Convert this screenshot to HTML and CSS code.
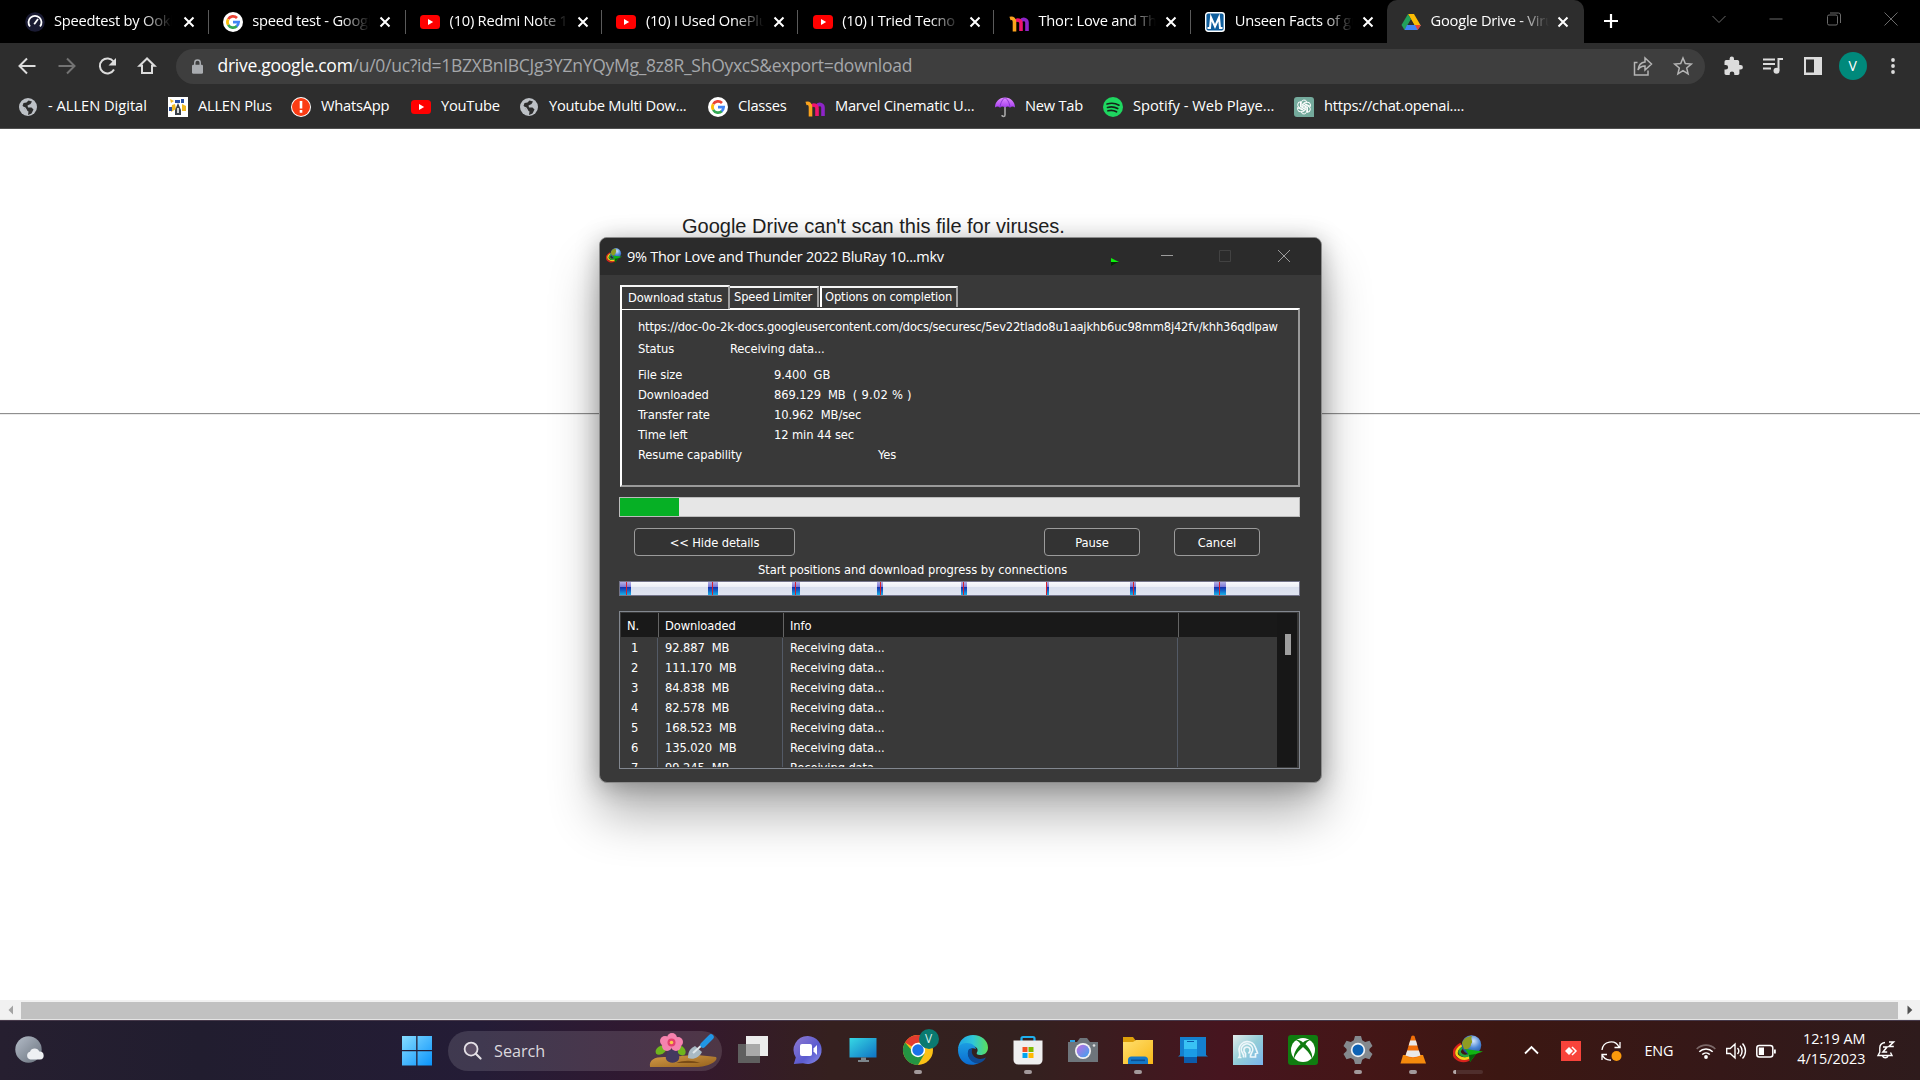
FILE: index.html
```html
<!DOCTYPE html>
<html lang="en">
<head>
<meta charset="utf-8">
<title>Google Drive - Virus scan warning</title>
<link rel="stylesheet" href="styles.css">
</head>
<body>
<svg class="defs" width="0" height="0" aria-hidden="true">
  <defs>
    <linearGradient id="gMoon" x1="0" y1="0" x2="1" y2="1"><stop offset="0" stop-color="#b4bcc8"/><stop offset="1" stop-color="#68717c"/></linearGradient>
    <linearGradient id="gWin" x1="0" y1="0" x2="1" y2="1"><stop offset="0" stop-color="#86dcff"/><stop offset="1" stop-color="#0a93fb"/></linearGradient>
    <linearGradient id="gChat" x1="0" y1="0" x2="1" y2="1"><stop offset="0" stop-color="#8f7ad0"/><stop offset=".6" stop-color="#5b5bd0"/><stop offset="1" stop-color="#8a8ee8"/></linearGradient>
    <linearGradient id="gMon" x1="0" y1="0" x2="1" y2="1"><stop offset="0" stop-color="#36d8e4"/><stop offset="1" stop-color="#0f72c4"/></linearGradient>
    <linearGradient id="gEdge1" x1="0" y1="0" x2="1" y2="0"><stop offset="0" stop-color="#1fa5e6"/><stop offset=".5" stop-color="#2fc6d8"/><stop offset="1" stop-color="#5be05a"/></linearGradient>
    <linearGradient id="gEdge2" x1="0" y1="0" x2="0" y2="1"><stop offset="0" stop-color="#1b9de2"/><stop offset="1" stop-color="#0b6bd0"/></linearGradient>
    <linearGradient id="gLens" x1="0" y1="0" x2="1" y2="1"><stop offset="0" stop-color="#c46be0"/><stop offset="1" stop-color="#3aa5ee"/></linearGradient>
    <linearGradient id="gFold" x1="0" y1="0" x2="1" y2="1"><stop offset="0" stop-color="#ffdf6e"/><stop offset="1" stop-color="#f8b818"/></linearGradient>
    <linearGradient id="gHead" x1="0" y1="0" x2="1" y2="1"><stop offset="0" stop-color="#e2ebea"/><stop offset=".5" stop-color="#93cdd8"/><stop offset="1" stop-color="#79b4ec"/></linearGradient>
    <linearGradient id="gUmb" x1="0" y1="0" x2="0" y2="1"><stop offset="0" stop-color="#e08cff"/><stop offset="1" stop-color="#a63df0"/></linearGradient>
    <linearGradient id="gBench" x1="0" y1="0" x2="1" y2="1"><stop offset="0" stop-color="#d29a48"/><stop offset="1" stop-color="#96621c"/></linearGradient>
    <radialGradient id="gGlobe" cx=".6" cy=".3" r=".8"><stop offset="0" stop-color="#d4e6fb"/><stop offset=".45" stop-color="#4a86d6"/><stop offset="1" stop-color="#183c7c"/></radialGradient>
    <symbol id="yt" viewBox="0 0 20 20"><rect y="3" width="20" height="14" rx="3.5" fill="#f00"/><path d="M8 7l5.2 3L8 13z" fill="#fff"/></symbol>
    <symbol id="google" viewBox="0 0 20 20"><circle cx="10" cy="10" r="10" fill="#fff"/><g fill="none" stroke-width="2.7"><path d="M5.2 7.2A5.6 5.6 0 0 1 14 6" stroke="#ea4335"/><path d="M5.2 12.8a5.6 5.6 0 0 1 0-5.6" stroke="#fbbc05"/><path d="M14 14a5.6 5.6 0 0 1-8.8-1.2" stroke="#34a853"/><path d="M10 10.2h5.6A5.6 5.6 0 0 1 13.6 14.2" stroke="#4285f4"/></g></symbol>
    <symbol id="m" viewBox="0 0 20 20"><g fill="none" stroke-width="3.6" stroke-linecap="butt"><path d="M12 9a3.200 3.200 0 0 1 6 1.500V19" stroke="#8e24c8"/><path d="M6.500 9a3.200 3.200 0 0 1 5.500 2V19" stroke="#f0146e"/><path d="M1 6.500c3-1 4.500 1 4.500 4V19.500" stroke="#fba31c"/></g></symbol>
    <symbol id="globe" viewBox="0 0 20 20"><circle cx="10" cy="10" r="9" fill="#bdc1c6"/><path d="M10.500 3.500l3.500 1-1.500 2.500-3 1.500.5 2 3.500 0 2 2-2 4-3.500 1.500.5-3.500-3-1.500-3-4 1-3 3-.5z" fill="#2d2d2d"/><path d="M2 9l5 2 1.500 2.500-1 3" fill="none" stroke="#bdc1c6" stroke-width="1.500"/></symbol>
    <symbol id="x" viewBox="0 0 12 12"><path d="M1.500 1.500l9 9M10.500 1.500l-9 9" stroke="#fff" stroke-width="2"/></symbol>
    <symbol id="idm" viewBox="0 0 30 30"><path d="M8 9C-1 14-1 22 6 25c5 2 10 0 13-3" fill="none" stroke="#d8231c" stroke-width="2.600"/><path d="M9 10.500C2 15 2 20 7 22.500c4 2 8 1 11-2" fill="none" stroke="#f6d21c" stroke-width="2.600"/><path d="M10.500 12c-5 3-5 6-1.500 8.200 3 1.500 6 .8 9-1.500" fill="none" stroke="#28a63c" stroke-width="2.600"/><circle cx="18.500" cy="10" r="9.800" fill="url(#gGlobe)"/><path d="M9 8c2-5 6-7 10-7-2 4 2 5-1 8 0 4-4 6-7 5z" fill="#8f9c22"/><path d="M12 14l18 2.500-7 2.500-6 8-1-7z" fill="#10b412"/><path d="M16 20l7-1-6 8z" fill="#056008"/></symbol>
  </defs>
</svg>

<header class="browser">
  <div class="tabstrip">
    <div class="tab"><svg class="fav" viewBox="0 0 20 20"><circle cx="10" cy="10" r="9.800" fill="#1a1b33"/><path d="M5 14.500a6.500 6.500 0 1 1 10 0" fill="none" stroke="#fff" stroke-width="1.800"/><path d="M9.200 12.200L13 7" stroke="#fff" stroke-width="1.800"/></svg><span class="tab-title">Speedtest by Ookla</span><svg class="tab-x"><use href="#x"/></svg></div>
    <div class="tab"><svg class="fav"><use href="#google"/></svg><span class="tab-title">speed test - Google</span><svg class="tab-x"><use href="#x"/></svg></div>
    <div class="tab"><svg class="fav"><use href="#yt"/></svg><span class="tab-title">(10) Redmi Note 12</span><svg class="tab-x"><use href="#x"/></svg></div>
    <div class="tab"><svg class="fav"><use href="#yt"/></svg><span class="tab-title">(10) I Used OnePlus</span><svg class="tab-x"><use href="#x"/></svg></div>
    <div class="tab"><svg class="fav"><use href="#yt"/></svg><span class="tab-title">(10) I Tried Tecno</span><svg class="tab-x"><use href="#x"/></svg></div>
    <div class="tab"><svg class="fav"><use href="#m"/></svg><span class="tab-title">Thor: Love and Thunder</span><svg class="tab-x"><use href="#x"/></svg></div>
    <div class="tab last"><svg class="fav" viewBox="0 0 20 20"><rect x=".7" y=".7" width="18.600" height="18.600" rx="2.500" fill="#0e5d9c" stroke="#fff" stroke-width="1.400"/><path d="M2.500 16H5L6 5.500 10 14.500l4-9L15 16h2.500" fill="none" stroke="#fff" stroke-width="2"/></svg><span class="tab-title">Unseen Facts of guardians</span><svg class="tab-x"><use href="#x"/></svg></div>
    <div class="tab active"><svg class="fav" viewBox="0 0 20 20"><path d="M7 2h6l7 12h-6z" fill="#fbbc04"/><path d="M7 2l3 5.200L3.500 18 .5 13z" fill="#22a05a"/><path d="M6 13h14l-3.500 5h-13z" fill="#4285f4"/><path d="M14 13h6l-3.300 5z" fill="#ea4335"/><path d="M10 7.500L13 13H7z" fill="#2d2d2d"/></svg><span class="tab-title">Google Drive - Virus scan</span><svg class="tab-x"><use href="#x"/></svg></div>
    <svg class="newtab" viewBox="0 0 16 16"><path d="M8 1v14M1 8h14" stroke="#fff" stroke-width="2.200"/></svg>
    <div class="wincontrols">
      <svg viewBox="0 0 14 14"><path d="M.5 4L7 10.500 13.500 4"/></svg>
      <svg viewBox="0 0 14 14"><path d="M.5 7h13"/></svg>
      <svg viewBox="0 0 14 14"><rect x=".5" y="3" width="10" height="10" rx="1.500"/><path d="M3 1h8.500a2 2 0 0 1 2 2v8"/></svg>
      <svg viewBox="0 0 14 14"><path d="M.5.5l13 13M13.500.5l-13 13"/></svg>
    </div>
  </div>

  <div class="toolbar">
    <svg class="nav" viewBox="0 0 20 20"><path d="M18.500 10H3M10 2.500L2.500 10l7.500 7.500"/></svg>
    <svg class="nav dim" viewBox="0 0 20 20"><path d="M1.500 10H17M10 2.500l7.500 7.500-7.500 7.500"/></svg>
    <svg class="nav" viewBox="0 0 20 20"><path d="M17 13.500A7.500 7.500 0 1 1 16.500 5.500"/><path d="M19 2v7.500h-7.500z" fill="#dcdcdc" stroke="none"/></svg>
    <svg class="nav" viewBox="0 0 20 20"><path d="M10 2.500L2.500 9.800H5V17h10V9.800h2.500z"/></svg>
    <div class="omnibox">
      <svg class="lock" viewBox="0 0 12 16"><rect y="6" width="12" height="10" rx="1.500" fill="#a9acb0"/><path d="M3 7V4a3 3 0 0 1 6 0v3" fill="none" stroke="#a9acb0" stroke-width="1.600"/></svg>
      <span class="url"><span class="host">drive.google.com</span>/u/0/uc?id=1BZXBnIBCJg3YZnYQyMg_8z8R_ShOyxcS&amp;export=download</span>
      <svg class="oi" viewBox="0 0 20 20"><path d="M4.500 6.500H1.500V19H15v-4.500M5 14c.5-5 3-7.500 7-8V2l6.500 6-6.500 6V10c-3 0-5.500 1-7 4z"/></svg>
      <svg class="oi" viewBox="0 0 20 20"><path d="M10 2l2.300 5.600 6 .5-4.600 3.900 1.400 5.900L10 14.700l-5.100 3.200 1.400-5.900L1.700 8.100l6-.5z"/></svg>
    </div>
    <div class="actions">
      <svg viewBox="0 0 20 20"><path d="M17.500 9h-1.300V5.500A1.700 1.700 0 0 0 14.500 4h-3.500V2.700a2.200 2.200 0 0 0-4.400 0V4H3.200A1.700 1.700 0 0 0 1.500 5.700V9h1.300a2.300 2.300 0 0 1 0 4.600H1.500v3.700c0 .9.700 1.700 1.700 1.700h3.500v-1.300a2.300 2.300 0 0 1 4.600 0V19h3.400c.9 0 1.700-.8 1.700-1.700v-3.700h1.200a2.300 2.300 0 0 0 0-4.600z" fill="#dcdcdc"/></svg>
      <svg viewBox="0 0 20 20"><path d="M0 3.500h12M0 8h12M0 12.500h8M15.500 14.500V3h4.500" fill="none" stroke="#dcdcdc" stroke-width="2"/><circle cx="13.500" cy="14.700" r="3" fill="#dcdcdc"/></svg>
      <svg viewBox="0 0 20 20"><path d="M1 1h18v18H1zM3 3.500v13h8v-13z" fill="#dcdcdc" fill-rule="evenodd"/></svg>
      <span class="avatar">V</span>
      <svg viewBox="0 0 20 20"><g fill="#dcdcdc"><circle cx="10" cy="4" r="1.900"/><circle cx="10" cy="10" r="1.900"/><circle cx="10" cy="16" r="1.900"/></g></svg>
    </div>
  </div>

  <nav class="bookmarks">
    <a><svg><use href="#globe"/></svg><span class="wide">- ALLEN Digital</span></a>
    <a><svg viewBox="0 0 20 20"><path d="M0 0h20v20H0z" fill="#fff"/><path d="M2 2l4 2-3 2zM4 8l3-1 1 5-5 3zM14 7l4 2v5h-4z" fill="#f0b820"/><path d="M7 3h5v3H7zM13 2h3v4h-3zM1 10h3v4H1z" fill="#2a4fa0"/><path d="M10 6l3 7v5H7v-5z" fill="#3b4148"/><path d="M9.200 11h1.600v5H9.200z" fill="#fff"/></svg><span>ALLEN Plus</span></a>
    <a><svg viewBox="0 0 20 20"><circle cx="10" cy="10" r="10" fill="#fff"/><circle cx="10" cy="10" r="9" fill="#fb3c14"/><path d="M8.700 4h2.600v7.500H8.700zM8.700 13h2.600v2.700H8.700z" fill="#fff"/></svg><span>WhatsApp</span></a>
    <a><svg><use href="#yt"/></svg><span>YouTube</span></a>
    <a><svg><use href="#globe"/></svg><span>Youtube Multi Dow...</span></a>
    <a><svg><use href="#google"/></svg><span>Classes</span></a>
    <a><svg><use href="#m"/></svg><span>Marvel Cinematic U...</span></a>
    <a><svg viewBox="0 0 20 20"><path d="M10 10v8a1.500 1.500 0 0 1-3 0" fill="none" stroke="#a8a8a8" stroke-width="1.600"/><path d="M0 10.500C0 5 4 .5 10 .5s10 4.500 10 10c-1.500-1.500-3.500-1.500-5 0-1.500-1.500-3-1.500-5 0-2-1.500-3.500-1.500-5 0-1.500-1.500-3.500-1.500-5 0z" fill="url(#gUmb)"/><path d="M5 10.500C5.500 5 8 2 10 .5M15 10.500C14.500 5 12 2 10 .5" fill="none" stroke="#7a2ac8" stroke-width=".8"/></svg><span>New Tab</span></a>
    <a><svg viewBox="0 0 20 20"><circle cx="10" cy="10" r="10" fill="#1ed760"/><path d="M4 7c4-1.200 8.500-.8 12 1.200M4.500 10.500c3.500-1 7.200-.6 10.200 1.100M5 13.800c3-.8 5.900-.5 8.500 1" fill="none" stroke="#14251a" stroke-width="1.700" stroke-linecap="round"/></svg><span class="wide">Spotify - Web Playe...</span></a>
    <a><svg viewBox="0 0 20 20"><path d="M3 0h14a3 3 0 0 1 3 3v17H3a3 3 0 0 1-3-3V3a3 3 0 0 1 3-3z" fill="#74aa9c"/><g fill="none" stroke="#fff" stroke-width="1"><path id="k" d="M7.200 10.500V6a3 3 0 0 1 5.500-1.600L8.800 6.700v4.600"/><use href="#k" transform="rotate(60 10 10)"/><use href="#k" transform="rotate(120 10 10)"/><use href="#k" transform="rotate(180 10 10)"/><use href="#k" transform="rotate(240 10 10)"/><use href="#k" transform="rotate(300 10 10)"/></g></svg><span>https://chat.openai....</span></a>
  </nav>
</header>

<main class="page">
  <p class="warning">Google Drive can't scan this file for viruses.</p>
  <hr class="rule">
</main>

<div class="hscroll">
  <svg viewBox="0 0 20 20"><path d="M13 5.500v9L8.500 10z" fill="#a3a3a3"/></svg>
  <div class="hthumb"></div>
  <svg viewBox="0 0 20 20"><path d="M7.500 5.500v9l4.800-4.500z" fill="#505050"/></svg>
</div>

<footer class="taskbar">
  <svg class="weather" viewBox="0 0 30 30"><circle cx="13.500" cy="13.500" r="13.200" fill="url(#gMoon)"/><path d="M15.500 23.500a4 4 0 0 1-.5-7.800 5 5 0 0 1 9.300-.2 4 4 0 0 1 .7 8z" fill="#eef0f3"/></svg>
  <svg class="start" viewBox="0 0 30 30"><path d="M0 0h14.200v14H0zM15.500 0H30v14H15.500zM0 15.300h14.200V29.500H0zM15.500 15.300H30V29.500H15.500z" fill="url(#gWin)"/></svg>
  <div class="search">
    <svg class="mag" viewBox="0 0 20 20"><circle cx="8.500" cy="8.500" r="6.800" fill="#5c4f66" stroke="#e4e0e6" stroke-width="1.900"/><path d="M13.500 13.500l5 5" stroke="#e4e0e6" stroke-width="2.300" stroke-linecap="round"/></svg>
    <span>Search</span>
    <svg class="flower" viewBox="0 0 68 34"><path d="M0 33c-1-7 4-10 14-10 18 0 26-4 52 0 3 4-8 10-20 10z" fill="url(#gBench)"/><path d="M26 29c8-3 16-3 24 0z" fill="#7a4c16"/><ellipse cx="11" cy="16" rx="6" ry="4" transform="rotate(-35 11 16)" fill="#6fb51d"/><ellipse cx="31" cy="16.500" rx="5.500" ry="4" transform="rotate(50 31 16.500)" fill="#6fb51d"/><path d="M17 16h11c-1 3 2 6 1 9-2 5-11 5-13 0-1-3 2-6 1-9z" fill="#43395f"/><g fill="#f583ae"><circle cx="22" cy="4" r="5"/><circle cx="28" cy="8" r="5"/><circle cx="26" cy="12" r="5"/><circle cx="17" cy="12" r="5"/><circle cx="15" cy="7" r="5"/></g><circle cx="21.500" cy="8.500" r="4" fill="#e3406f"/><circle cx="21.500" cy="8.500" r="1.800" fill="#f7c948"/><path d="M45 12l7 6c-3 6-9 8-14 6 0-5 1-9 7-12z" fill="#a9bac4"/><path d="M43 19l9-8" stroke="#dfe7eb" stroke-width="2"/><path d="M53 11l8-8" stroke="#2196e6" stroke-width="5.500" stroke-linecap="round"/></svg>
  </div>
  <div class="apps">
    <div class="app"><svg viewBox="0 0 30 30"><path d="M8 1h22v20H8z" fill="#ececec"/><path d="M0 9h22v19H0z" fill="#5f5f5f"/><path d="M8 9h14v12H8z" fill="#a9a9a9"/></svg></div>
    <div class="app"><svg viewBox="0 0 30 30"><path d="M15 1a14 14 0 1 1-5 27.200L.8 29l2-6.500A14 14 0 0 1 15 1z" fill="url(#gChat)"/><rect x="7" y="9" width="12" height="12" rx="2" fill="#fff"/><path d="M20.500 13.500L24 10v10l-3.500-3.500z" fill="#fff"/></svg></div>
    <div class="app"><svg viewBox="0 0 30 30"><path d="M1.500 3h27v19.500h-27z" fill="url(#gMon)"/><path d="M13 22.500h5V25h3v2H10v-2h3z" fill="#7d868c"/></svg></div>
    <div class="app run"><svg viewBox="0 0 30 30"><circle cx="15" cy="15" r="15" fill="#fbc116"/><path d="M15 15L2 7.500A15 15 0 0 1 28 7.500H15z" fill="#e33b2e"/><path d="M2 7.500A15 15 0 0 0 15 30l6.500-11.200L15 15H8.500z" fill="#249443"/><circle cx="15" cy="15" r="7.200" fill="#fff"/><circle cx="15" cy="15" r="5.700" fill="#1a73e8"/></svg><span class="appbadge">V</span></div>
    <div class="app"><svg viewBox="0 0 30 30"><path d="M0 14C1 5 7 0 15 0c9 0 15 6 15 12.500 0 5-3.500 7.500-8 7.500-3 0-4-1.200-3-2.700 1.500-2 .5-5.800-4.500-6.300C8 10.500 2 11 0 14z" fill="url(#gEdge1)"/><path d="M0 15c0-4 4-7.500 9-7 5 0 8.500 3 9 6-6-3-10 3-7 8 2.500 4.500 7 6 11 5.500C10 34 0 26 0 15z" fill="url(#gEdge2)"/><path d="M11 14c-3 5 0 12 6 14 5 1.500 9-2 11-5.500-4 2-9 2-12-1-2-2-3-5-1.500-8z" fill="#0e4a94"/></svg></div>
    <div class="app run"><svg viewBox="0 0 30 30"><path d="M8.500 6.500V3.500q0-1.500 1.500-1.500h10q1.500 0 1.500 1.500v3" fill="none" stroke="#1fb0ee" stroke-width="2.200"/><path d="M.5 5.500h29V25a4.500 4.500 0 0 1-4.500 4.500H5A4.500 4.500 0 0 1 .5 25z" fill="#efefef"/><path d="M9.500 12h5v5h-5z" fill="#f25022"/><path d="M15.500 12h5v5h-5z" fill="#7fba00"/><path d="M9.500 18h5v5h-5z" fill="#00a4ef"/><path d="M15.500 18h5v5h-5z" fill="#ffb900"/></svg></div>
    <div class="app"><svg viewBox="0 0 30 30"><path d="M2 5h5v3H2z" fill="#2aa0e0"/><path d="M0 7h9l3-4h7l3 4h8v20H0z" fill="#6e757b"/><circle cx="15" cy="16" r="8" fill="#f2f2f2"/><circle cx="15" cy="16" r="6.300" fill="url(#gLens)"/><circle cx="26" cy="10.500" r="1.300" fill="#ddd"/></svg></div>
    <div class="app run"><svg viewBox="0 0 30 30"><path d="M0 2h10l3 4h15v10H0z" fill="#dd9f0a"/><path d="M0 7h10l3-2h17v24H0z" fill="url(#gFold)"/><path d="M5 29v-4q0-3.500 3.500-3.500h13Q25 21.500 25 25v4z" fill="#1478c8"/><path d="M8 25.300h14" stroke="#0b4f93" stroke-width="1.600"/></svg></div>
    <div class="app"><svg viewBox="0 0 30 30"><path d="M2 2h26v18l2 1.500H0L2 20z" fill="#1480cf"/><path d="M6 5h13v23H6z" fill="#1a9be6"/><path d="M6 5h13v9H6z" fill="#39c2f4"/><path d="M6 22h13v6H6z" fill="#0b5bab"/><path d="M9 6.500h7" stroke="#0b5bab"/></svg></div>
    <div class="app"><svg viewBox="0 0 30 30"><path d="M0 0h30v30H0z" fill="url(#gHead)"/><g fill="none" stroke="#eef7fb" stroke-width="1.700"><path d="M8.500 22.500L6 22.500C8 20 6 18 6 14a8.500 8.500 0 0 1 16.500-1.500L24.500 18l-2 .8v3.200h-5"/><path d="M10.500 22.500c.5-2 0-3-1-4.500a5.700 5.700 0 1 1 9 0c-1 1.500-1.500 2.500-1 4.500"/><path d="M12.500 22.500v-4c-3-3-1.500-6.500 1.500-6.500s4.500 3.500 1.500 6.500"/></g></svg></div>
    <div class="app"><svg viewBox="0 0 30 30"><rect width="30" height="30" rx="3" fill="#107c10"/><circle cx="15" cy="15" r="12" fill="#fff"/><path d="M7 5c3-.7 5.500.5 8 2.500 2.500-2 5-3.200 8-2.500-2.500 0-4.500 2.300-5.500 4.200 4 4 7.500 9.800 6.500 14.300-2-5-6-9-9-11.500-3 2.500-7 6.500-9 11.500-1-4.500 2.500-10.300 6.500-14.300C11.500 7.300 9.500 5 7 5z" fill="#107c10"/></svg></div>
    <div class="app run"><svg viewBox="0 0 30 30"><path d="M12 1h6l1.200 4.300 3 1.700 4.300-1.200 3 5.200-3.100 3v2l3.100 3-3 5.200-4.300-1.200-3 1.700L18 29h-6l-1.200-4.300-3-1.700-4.300 1.200-3-5.200L3.600 16v-2L.5 11l3-5.200L7.800 7l3-1.700z" fill="#84898e"/><circle cx="15" cy="15" r="7.200" fill="#f0f3f5"/><circle cx="15" cy="15" r="5.500" fill="#0d62b4"/></svg></div>
    <div class="app run"><svg viewBox="0 0 30 30"><path d="M5 20h20l3 8.500H2.500z" fill="#f58a0c"/><path d="M13.500 1q1.500-1.200 3 0l6 20q-7.500 4-15 0z" fill="#f2700a"/><path d="M12.200 5.500h5.700l1.500 5h-8.800zM9.200 15.500h11.700l1.600 5q-7.500 3.500-15 0z" fill="#e9e9e9"/></svg></div>
    <div class="app prog"><svg><use href="#idm"/></svg></div>
  </div>
  <div class="tray">
    <svg class="t-chev" viewBox="0 0 20 20"><path d="M4 12.500L10.500 6l6.500 6.500" fill="none" stroke="#fff" stroke-width="1.800"/></svg>
    <svg class="t-red" viewBox="0 0 20 20"><path d="M0 0h20v20H0z" fill="#f8433b"/><path d="M4 10l4-4 4 4-4 4z" fill="#fff"/><path d="M11 6l4 4-4 4" fill="none" stroke="#fff" stroke-width="1.500"/></svg>
    <svg class="t-sync" viewBox="0 0 20 20"><path d="M1 9A9 9 0 0 1 18 6M19 1v5.500h-5.500M1 19v-5.500h5M1 13.500A9 9 0 0 0 10 19" fill="none" stroke="#fff" stroke-width="1.300"/><circle cx="15.500" cy="15" r="5" fill="#fb9a0c"/></svg>
    <span class="lang">ENG</span>
    <svg class="t-wifi" viewBox="0 0 20 20"><g fill="none" stroke="#fff" stroke-width="1.600"><path d="M.7 8A13 13 0 0 1 19.300 8" opacity=".35"/><path d="M3.300 10.800a9.500 9.500 0 0 1 13.400 0M6.200 13.500a5.500 5.500 0 0 1 7.600 0"/></g><circle cx="10" cy="16" r="1.900" fill="#fff"/></svg>
    <svg class="t-vol" viewBox="0 0 20 20"><g fill="none" stroke="#fff" stroke-width="1.400"><path d="M.7 7.500h3.500L9 3v14l-4.800-4.500H.7zM11.500 7a4.500 4.500 0 0 1 0 6M14 4.800a7.500 7.500 0 0 1 0 10.400M16.500 2.500a11 11 0 0 1 0 15"/></g></svg>
    <svg class="t-bat" viewBox="0 0 20 20"><rect x=".8" y="4.500" width="16" height="11.500" rx="2.500" fill="none" stroke="#fff" stroke-width="1.500"/><path d="M18 8.500h1.800v4H18zM2.800 6.500H8V14H2.800z" fill="#fff"/></svg>
    <div class="clock"><span>12:19 AM</span><span>4/15/2023</span></div>
    <svg class="t-bell" viewBox="0 0 18 20"><path d="M8 2.500C4.500 3 2.800 5 2.800 8v4L1 15.500h14L13.500 12.500M5.500 16a3 3 0 0 0 5.500 0" fill="none" stroke="#fff" stroke-width="1.400"/><path d="M6 7h4l-4 5h4.200M12 2h4.500L12 6.500h4.800" fill="none" stroke="#fff" stroke-width="1.600"/></svg>
  </div>
</footer>

<section class="dialog">
  <div class="titlebar">
    <svg class="dlg-icon"><use href="#idm"/></svg>
    <span class="dlg-title">9% Thor Love and Thunder 2022 BluRay 10...mkv</span>
    <svg class="flag" viewBox="0 0 9 9"><path d="M0 0l9 4.500H0z" fill="#0cf20c"/><path d="M0 4.500h8L0 9z" fill="#062a06"/></svg>
    <svg class="wc" viewBox="0 0 12 12"><path d="M0 5.500h12"/></svg>
    <svg class="wc off" viewBox="0 0 12 12"><path d="M.5.500h11v11H.5z"/></svg>
    <svg class="wc" viewBox="0 0 12 12"><path d="M0 0l12 12M12 0L0 12"/></svg>
  </div>
  <div class="dlg-body">
    <div class="dtabs">
      <span class="dtab on">Download status</span><span class="dtab t2">Speed Limiter</span><span class="dtab t3">Options on completion</span>
    </div>
    <div class="pane">
      <div class="long">https://doc-0o-2k-docs.googleusercontent.com/docs/securesc/5ev22tlado8u1aajkhb6uc98mm8j42fv/khh36qdlpaw</div>
      <dl class="status"><dt>Status</dt><dd>Receiving data...</dd></dl>
      <dl class="info">
        <dt>File size</dt><dd>9.400&nbsp; GB</dd>
        <dt>Downloaded</dt><dd>869.129&nbsp; MB&nbsp; <span class="pct">( 9.02 % )</span></dd>
        <dt>Transfer rate</dt><dd>10.962&nbsp; MB/sec</dd>
        <dt>Time left</dt><dd>12 min 44 sec</dd>
        <dt>Resume capability</dt><dd class="yes">Yes</dd>
      </dl>
    </div>
    <div class="progress"><div class="fill" style="width:59px"></div></div>
    <div class="buttons">
      <button class="b-hide">&lt;&lt; Hide details</button>
      <button class="b-pause">Pause</button>
      <button class="b-cancel">Cancel</button>
    </div>
    <div class="caption">Start positions and download progress by connections</div>
    <div class="segments">
      <i style="left:0;width:11px;--r:6px"></i>
      <i style="left:88px;width:10px;--r:4px"></i>
      <i style="left:172px;width:8px;--r:3px"></i>
      <i style="left:257px;width:6px;--r:3px"></i>
      <i style="left:341px;width:6px;--r:2px"></i>
      <i style="left:426px;width:3px;--r:0px"></i>
      <i style="left:510px;width:6px;--r:3px"></i>
      <i style="left:594px;width:12px;--r:5px"></i>
    </div>
    <div class="list">
      <div class="rows">
        <div class="row head"><span>N.</span><span>Downloaded</span><span>Info</span><span></span></div>
        <div class="row"><span>1</span><span>92.887&nbsp; MB</span><span>Receiving data...</span><span></span></div>
        <div class="row"><span>2</span><span>111.170&nbsp; MB</span><span>Receiving data...</span><span></span></div>
        <div class="row"><span>3</span><span>84.838&nbsp; MB</span><span>Receiving data...</span><span></span></div>
        <div class="row"><span>4</span><span>82.578&nbsp; MB</span><span>Receiving data...</span><span></span></div>
        <div class="row"><span>5</span><span>168.523&nbsp; MB</span><span>Receiving data...</span><span></span></div>
        <div class="row"><span>6</span><span>135.020&nbsp; MB</span><span>Receiving data...</span><span></span></div>
        <div class="row"><span>7</span><span>99.245&nbsp; MB</span><span>Receiving data...</span><span></span></div>
      </div>
      <div class="vscroll"><div class="vthumb"></div></div>
    </div>
  </div>
</section>
</body>
</html>
```

FILE: styles.css
```css
* { box-sizing: border-box; }
body { margin: 0; width: 1920px; height: 1080px; overflow: hidden; position: relative; display: flex; flex-direction: column; background: #fff; font: 14.7px "Open Sans", "Noto Sans", sans-serif; letter-spacing: -0.25px; color: #fff; }
svg { display: block; flex: none; overflow: visible; }
.defs { position: absolute; }

/* browser chrome */
.browser { height: 129px; background: #2d2d2d; border-bottom: 1px solid #505050; flex: none; }
.tabstrip { height: 43px; background: #000; display: flex; padding-left: 13px; }
.tab { width: 196.3px; flex: none; display: flex; align-items: center; padding-left: 14.500px; position: relative; white-space: nowrap; }
.tab:nth-child(1) { padding-left: 11.500px; }
.tab:nth-child(2) { padding-left: 13.500px; }
.tab::after { content: ""; position: absolute; right: 0; top: 10px; width: 1px; height: 24px; background: #5a5a5a; }
.tab.last::after, .tab.active::after { display: none; }
.fav { width: 20px; height: 20px; margin-right: 9.500px; }
.tab-title { width: 118px; overflow: hidden; line-height: 24px; padding-bottom: 3px; -webkit-mask-image: linear-gradient(90deg, #000 88px, transparent 118px); mask-image: linear-gradient(90deg, #000 88px, transparent 118px); }
.tab-x { width: 12px; height: 12px; margin-left: 9px; }
.tab:first-child .tab-x { margin-left: 11px; }
.tab.active { background: #2d2d2d; border-radius: 10px 10px 0 0; width: 197px; padding-left: 14px; }
.tab.active .tab-x { margin-left: 8.500px; }
.newtab { width: 16px; height: 16px; margin: 13px 0 0 19px; }
.wincontrols { margin-left: auto; display: flex; gap: 43.500px; padding: 12px 22px 0 0; }
.wincontrols svg { width: 14px; height: 14px; fill: none; stroke: #6b6b6b; stroke-width: 1; }

.toolbar { height: 46px; display: flex; align-items: center; padding-left: 17px; }
.nav { width: 20px; height: 20px; margin-right: 20px; fill: none; stroke: #dcdcdc; stroke-width: 2; }
.nav.dim { stroke: #737373; }
.omnibox { width: 1529px; height: 35px; margin-left: -1.500px; border-radius: 18px; background: #3e3e3e; display: flex; align-items: center; padding: 0 12px 0 16px; }
.lock { width: 11px; height: 15px; }
.url { margin-left: 15px; padding-bottom: 2px; flex: 1; font-size: 17.500px; letter-spacing: -0.275px; color: #a5a7aa; }
.host { color: #fff; }
.oi { width: 20px; height: 20px; margin-left: 20px; fill: none; stroke: #b4b4b4; stroke-width: 1.500; }
.actions { display: flex; align-items: center; margin-left: 18px; gap: 20px; }
.actions svg { width: 20px; height: 20px; }
.avatar { width: 28px; height: 28px; margin: 0 -4px; border-radius: 50%; background: #00897b; text-align: center; line-height: 27px; font-size: 14px; }

.bookmarks { display: grid; grid-template-columns: 150px 123px 120px 108px 189px 97px 190px 108px 191px 200px; padding-left: 18px; height: 35px; align-items: center; }
.bookmarks a { display: flex; align-items: center; gap: 10px; white-space: nowrap; }
.bookmarks span { padding-bottom: 3px; }
.bookmarks .wide { letter-spacing: -0.030px; }
.bookmarks svg { width: 20px; height: 20px; }

/* page */
.page { flex: 1; color: #222; }
.warning { margin: 82px 0 0 682px; height: 30px; font: 20px/30px "Liberation Sans", Arial, sans-serif; letter-spacing: 0; }
.rule { margin: 172px 0 0; border: 0; border-top: 1px solid #8f8f8f; border-bottom: 1px solid #ececec; }
.hscroll { height: 20px; background: #f1f1f1; display: flex; align-items: flex-start; border-bottom: 1px solid #e4e4e4; }
.hscroll svg { width: 20px; height: 20px; margin: 0 1px 0 0; }
.hscroll svg:last-child { margin: 0 0 0 2px; }
.hthumb { flex: 1; height: 17px; margin-top: 2px; background: #c1c1c1; }

/* taskbar */
.taskbar { height: 60px; flex: none; border-top: 1px solid #46394a; display: flex; align-items: center; background: linear-gradient(90deg, #261f30 0, #211d2f 200px, #241c36 480px, #34182f 680px, #35201f 830px, #33211f 1020px, #46151f 1220px, #441617 1360px, #3c1712 1500px, #351818 1720px, #2e1b1c 1920px); }
.weather { width: 30px; height: 30px; margin-left: 15px; }
.start { width: 30px; height: 30px; margin-left: 357px; }
.search { width: 274px; height: 40px; margin-left: 16px; border-radius: 20px; background: rgba(255, 255, 255, .13); display: flex; align-items: center; padding-left: 14.500px; color: #dcd8de; font-size: 16.200px; letter-spacing: 0; }
.mag { width: 19px; height: 19px; margin-right: 12.500px; }
.flower { width: 68px; height: 34px; margin-left: auto; margin-right: 4px; }
.apps { display: flex; margin-left: 3.500px; height: 59px; }
.app { width: 55px; display: flex; flex-direction: column; align-items: center; padding-top: 14px; position: relative; }
.app svg { width: 30px; height: 30px; }
.app.run::after { content: ""; width: 8px; height: 4px; border-radius: 2px; background: #a2999b; margin-top: 5px; }
.app.prog::after { content: ""; width: 30px; height: 4px; border-radius: 2px; margin-top: 5px; background: linear-gradient(90deg, #b5a9a9 3px, #4f2e2c 3px); }
.appbadge { position: absolute; left: 28px; top: 8px; width: 20px; height: 20px; border-radius: 50%; background: #0a7a70; font-size: 12px; line-height: 20px; text-align: center; color: #d8f0ec; }
.tray { display: flex; align-items: center; margin-left: 25px; }
.tray svg { width: 20px; height: 20px; }
.t-red { margin-left: 20px; }
.t-sync { margin-left: 20px; }
.lang { margin-left: 24px; width: 28px; font-size: 14.400px; letter-spacing: -0.200px; padding-bottom: 1px; }
.t-wifi { margin-left: 23px; }
.t-vol { margin-left: 10px; }
.t-bat { margin-left: 10px; }
.clock { width: 90px; display: flex; flex-direction: column; text-align: right; font-size: 14.400px; line-height: 20px; letter-spacing: 0; padding-bottom: 3px; }
.tray .t-bell { width: 18px; margin-left: 11px; margin-bottom: 2px; }

/* download window */
.dialog { position: absolute; left: 599px; top: 237px; width: 723px; height: 546px; border: 1px solid #8b8b8b; border-radius: 8px; background: #393939; overflow: visible; box-shadow: 0 32px 50px rgba(0, 0, 0, .3), 0 3px 24px rgba(0, 0, 0, .28); }
.titlebar { height: 37px; border-radius: 7px 7px 0 0; background: #2b2b2b; display: flex; align-items: center; padding-left: 6px; }
.dlg-icon { width: 16px; height: 16px; margin-bottom: 1px; }
.dlg-title { margin-left: 5px; width: 484px; font-size: 14.500px; letter-spacing: -0.270px; white-space: pre; }
.flag { width: 8px; height: 8px; margin-top: 10px; }
.wc { width: 12px; height: 12px; margin-left: 42px; fill: none; stroke: #9c9c9c; stroke-width: 1; margin-bottom: 1px; }
.wc + .wc { margin-left: 47px; }
.wc.off { stroke: #424242; margin-left: 46px; }
.dlg-body { padding: 10px 0 0 19px; font: 12.800px "DejaVu Sans Condensed", "Noto Sans", sans-serif; letter-spacing: -0.100px; width: 701px; }
.dtabs { display: flex; align-items: flex-end; height: 23px; margin-left: 1px; position: relative; z-index: 1; white-space: nowrap; }
.dtab { height: 21px; border-top: 2px solid #f4f4f4; border-right: 2px solid #a0a0a0; padding-left: 4px; line-height: 17.500px; margin-bottom: 1px; letter-spacing: -0.150px; }
.dtab.on { width: 110px; height: 24px; border-left: 2px solid #fff; padding-left: 6px; line-height: 22px; background: #393939; margin-bottom: -1px; }
.dtab.t2 { width: 89px; }
.dtab.t3 { width: 138px; border-left: 2px solid #fff; margin-left: 1px; padding-left: 3px; }
.pane { margin-left: 1px; width: 680px; height: 179px; border: 2px solid; border-color: #fff #9a9a9a #9a9a9a #fff; padding: 7px 16px 0; }
.long { height: 20px; line-height: 20px; width: 644px; overflow: hidden; white-space: nowrap; letter-spacing: -0.190px; }
dl, dd { margin: 0; }
.status { display: grid; grid-template-columns: 92px 1fr; line-height: 20px; margin-top: 2px; }
.info { display: grid; grid-template-columns: 136px 1fr; line-height: 20px; margin-top: 6px; }
.pct { letter-spacing: .25px; }
.yes { padding-left: 104px; }
.progress { margin-top: 10px; width: 681px; height: 20px; border: 1px solid #bcbcbc; background: #e6e6e6; }
.fill { height: 100%; background: #06b025; }
.buttons { display: flex; margin-top: 11px; padding-left: 15px; }
button { height: 28px; border: 1px solid #9b9b9b; border-radius: 4px; background: #333; color: #fff; font: inherit; letter-spacing: inherit; padding: 0; }
.b-hide { width: 161px; }
.b-pause { width: 96px; margin-left: 249px; }
.b-cancel { width: 86px; margin-left: 34px; }
.caption { margin: 3px 0 0 139px; height: 22px; line-height: 22px; letter-spacing: -0.060px; }
.segments { width: 681px; height: 15px; border: 1px solid #74748a; background: linear-gradient(#fafafd 0, #eceef6 38%, #dadfee 42%, #e0e4f0 100%); position: relative; }
.segments i { position: absolute; top: 0; height: 13px; background: linear-gradient(90deg, transparent var(--r), #d8202a var(--r), #d8202a calc(var(--r) + 1px), transparent calc(var(--r) + 1px)), linear-gradient(#b4b0e4 0, #7b76d4 38%, #1634b0 42%, #1460c4 65%, #18b4ea 100%); }
.list { margin-top: 15px; width: 681px; height: 158px; border: 1px solid #82878f; padding: 1px; display: flex; }
.rows { width: 656px; height: 154px; overflow: hidden; }
.row { display: grid; grid-template-columns: 37px 125px 395px 1fr; height: 20px; line-height: 20px; }
.row span { border-right: 1px solid #535a66; padding-left: 7px; }
.row span:first-child { padding-left: 10px; }
.row span:last-child { border: 0; }
.row.head { height: 24px; line-height: 26px; background: #191919; grid-template-columns: 38px 125px 395px 1fr; margin-bottom: 1px; }
.row.head span { border-color: #646464; padding-left: 6px; height: 24px; }
.vscroll { flex: 1; background: #171717; padding: 21px 0 0 8px; margin-right: 1px; }
.vthumb { width: 6px; height: 21px; background: #9f9f9f; }
```
